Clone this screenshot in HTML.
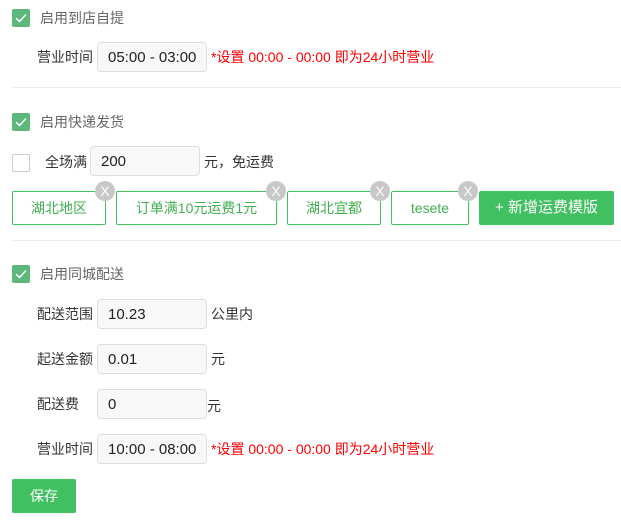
<!DOCTYPE html>
<html><head><meta charset="utf-8"><style>
*{margin:0;padding:0;box-sizing:border-box}
body{width:621px;height:528px;background:#fff;position:relative;overflow:hidden;font-family:"Liberation Sans","Noto Sans CJK SC",sans-serif;font-size:14px;color:#333}
.a{position:absolute;white-space:nowrap;line-height:16px}
.cb{position:absolute;width:18px;height:18px;border-radius:2px;background:#5cb87a}
.cb svg{position:absolute;left:3px;top:4px}
.ucb{position:absolute;width:18px;height:18px;border:1px solid #ccc;border-radius:2px;background:#fff}
.lab{color:#666}
.in{position:absolute;width:110px;height:30px;border:1px solid #ddd;border-radius:4px;background:#f8f8f8;padding-left:10px;display:flex;align-items:center;font-size:15px;color:#222;padding-top:1px}
.red{color:#f00}
.tag{position:absolute;top:191px;height:34px;border:1px solid #40c060;border-radius:2px;color:#40b050;text-align:center;line-height:32px;font-size:14px}
.x{position:absolute;width:20px;height:20px;border-radius:50%;background:#c8c8c8;color:#fff;text-align:center;line-height:20px;font-size:14px;top:181px}
.btn{position:absolute;background:#40c060;color:#fff;border-radius:2px;text-align:center;font-size:14px}
.hr{position:absolute;left:12px;width:609px;height:1px;background:#eee}
</style></head><body>
<div class="cb" style="left:12px;top:9px"><svg width="12" height="10"><path d="M1 5l3.5 3.5L11 1.5" stroke="#fff" stroke-width="1.5" fill="none"/></svg></div>
<div class="a lab" style="left:40px;top:10px">启用到店自提</div>
<div class="a" style="left:37px;top:49px">营业时间</div>
<div class="in" style="left:97px;top:42px">05:00 - 03:00</div>
<div class="a red" style="left:211px;top:49px">*设置 00:00 - 00:00 即为24小时营业</div>
<div class="hr" style="top:87px"></div>
<div class="cb" style="left:12px;top:113px"><svg width="12" height="10"><path d="M1 5l3.5 3.5L11 1.5" stroke="#fff" stroke-width="1.5" fill="none"/></svg></div>
<div class="a lab" style="left:40px;top:114px">启用快递发货</div>
<div class="ucb" style="left:12px;top:154px"></div>
<div class="a" style="left:45px;top:154px">全场满</div>
<div class="in" style="left:90px;top:146px">200</div>
<div class="a" style="left:204px;top:154px">元，免运费</div>
<div class="tag" style="left:12px;width:94px">湖北地区</div>
<div class="tag" style="left:116px;width:161px">订单满10元运费1元</div>
<div class="tag" style="left:287px;width:94px">湖北宜都</div>
<div class="tag" style="left:391px;width:78px">tesete</div>
<div class="x" style="left:95px">X</div>
<div class="x" style="left:266px">X</div>
<div class="x" style="left:370px">X</div>
<div class="x" style="left:458px">X</div>
<div class="btn" style="left:479px;top:191px;width:135px;height:34px;line-height:34px;font-size:15px">+ 新增运费模版</div>
<div class="hr" style="top:240px"></div>
<div class="cb" style="left:12px;top:265px"><svg width="12" height="10"><path d="M1 5l3.5 3.5L11 1.5" stroke="#fff" stroke-width="1.5" fill="none"/></svg></div>
<div class="a lab" style="left:40px;top:266px">启用同城配送</div>
<div class="a" style="left:37px;top:306px">配送范围</div>
<div class="in" style="left:97px;top:299px">10.23</div>
<div class="a" style="left:211px;top:306px">公里内</div>
<div class="a" style="left:37px;top:351px">起送金额</div>
<div class="in" style="left:97px;top:344px">0.01</div>
<div class="a" style="left:211px;top:351px">元</div>
<div class="a" style="left:37px;top:396px">配送费</div>
<div class="in" style="left:97px;top:389px">0</div>
<div class="a" style="left:207px;top:398px">元</div>
<div class="a" style="left:37px;top:441px">营业时间</div>
<div class="in" style="left:97px;top:434px">10:00 - 08:00</div>
<div class="a red" style="left:211px;top:441px">*设置 00:00 - 00:00 即为24小时营业</div>
<div class="btn" style="left:12px;top:479px;width:64px;height:34px;line-height:34px">保存</div>
</body></html>
